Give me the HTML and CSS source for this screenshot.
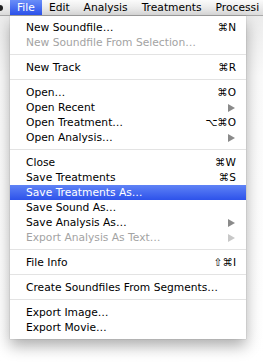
FILE: index.html
```html
<!DOCTYPE html>
<html>
<head>
<meta charset="utf-8">
<link rel="stylesheet" href="styles.css">
</head>
<body>
<div class="menubar">
  <span class="apple"></span>
  <span class="mb-item active">File</span>
  <span class="mb-item">Edit</span>
  <span class="mb-item">Analysis</span>
  <span class="mb-item">Treatments</span>
  <span class="mb-item">Processi</span>
</div>
<div class="stage">
  <div class="menu">
    <div class="row"><span>New Soundfile…</span><span class="key">⌘N</span></div>
    <div class="row disabled"><span>New Soundfile From Selection…</span></div>
    <div class="sep"></div>
    <div class="row"><span>New Track</span><span class="key">⌘R</span></div>
    <div class="sep"></div>
    <div class="row"><span>Open…</span><span class="key">⌘O</span></div>
    <div class="row"><span>Open Recent</span><span class="arrow"></span></div>
    <div class="row"><span>Open Treatment…</span><span class="key">⌥⌘O</span></div>
    <div class="row"><span>Open Analysis…</span><span class="arrow"></span></div>
    <div class="sep"></div>
    <div class="row"><span>Close</span><span class="key">⌘W</span></div>
    <div class="row"><span>Save Treatments</span><span class="key">⌘S</span></div>
    <div class="row selected"><span>Save Treatments As…</span></div>
    <div class="row"><span>Save Sound As…</span></div>
    <div class="row"><span>Save Analysis As…</span><span class="arrow"></span></div>
    <div class="row disabled"><span>Export Analysis As Text…</span><span class="arrow"></span></div>
    <div class="sep"></div>
    <div class="row"><span>File Info</span><span class="key">⇧⌘I</span></div>
    <div class="sep"></div>
    <div class="row"><span>Create Soundfiles From Segments…</span></div>
    <div class="sep"></div>
    <div class="row"><span>Export Image…</span></div>
    <div class="row"><span>Export Movie…</span></div>
  </div>
</div>
</body>
</html>
```
FILE: styles.css
```css
html, body {
  margin: 0;
  padding: 0;
  width: 263px;
  height: 362px;
  overflow: hidden;
  background: #ffffff;
  font-family: "DejaVu Sans", sans-serif;
  font-size: 10.7px;
  color: #000;
}
.menubar {
  height: 16px;
  display: flex;
  align-items: stretch;
  white-space: nowrap;
  background: linear-gradient(#fbfbfb, #dcdcdc);
  border-bottom: 1px solid #a9a9a9;
  box-sizing: border-box;
  overflow: hidden;
}
.apple {
  flex: none;
  width: 10px;
  position: relative;
}
.apple::before {
  content: "";
  position: absolute;
  left: -4px;
  top: 5px;
  width: 7px;
  height: 6px;
  border-radius: 50%;
  background: #222;
}
.mb-item {
  flex: none;
  padding: 0 7px;
  line-height: 15px;
}
.mb-item.active {
  color: #fff;
  background: linear-gradient(#6a8ef8, #2b51ea);
}
.stage {
  height: 346px;
  background: linear-gradient(#ececec, #fafafa 60px, #ffffff);
}
.menu {
  margin-left: 10px;
  width: 236px;
  background: #ffffff;
  padding: 4px 0 4px;
  box-shadow: 0 7px 14px rgba(0, 0, 0, 0.32), 0 0 1px rgba(0, 0, 0, 0.3);
}
.row {
  height: 15px;
  line-height: 15px;
  display: flex;
  justify-content: space-between;
  align-items: center;
  padding: 0 10px 0 16px;
  white-space: nowrap;
}
.row.disabled {
  color: #a3a3a3;
}
.row.selected {
  color: #fff;
  background: linear-gradient(#5f83f6, #2d52ea);
}
.key {
  font-size: 10.5px;
}
.arrow {
  width: 0;
  height: 0;
  margin-right: 1px;
  border-top: 4px solid transparent;
  border-bottom: 4px solid transparent;
  border-left: 7px solid #8a8a8a;
}
.row.disabled .arrow {
  border-left-color: #c8c8c8;
}
.sep {
  height: 1px;
  background: #e3e3e3;
  margin: 4px 0 5px;
}
```
